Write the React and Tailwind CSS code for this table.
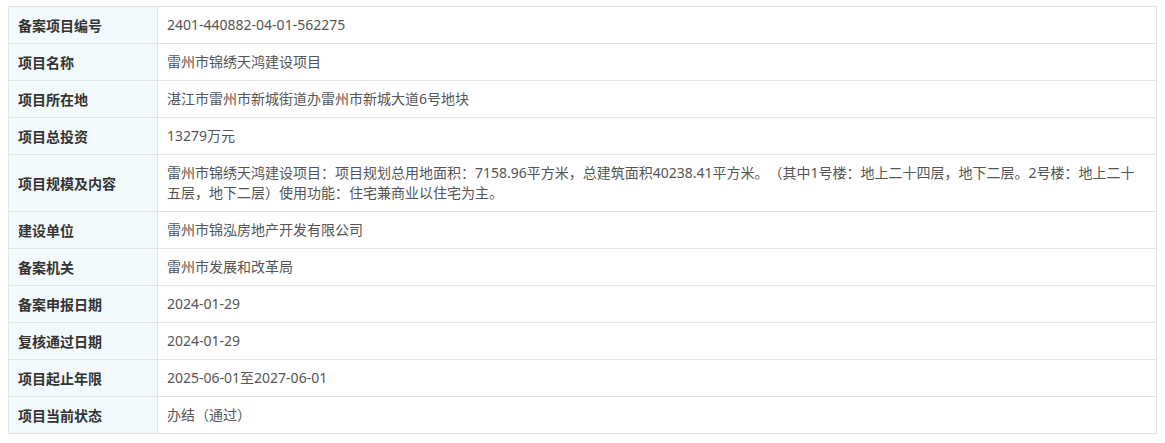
import React from 'react';

const rows = [
  ['备案项目编号', '2401-440882-04-01-562275'],
  ['项目名称', '雷州市锦绣天鸿建设项目'],
  ['项目所在地', '湛江市雷州市新城街道办雷州市新城大道6号地块'],
  ['项目总投资', '13279万元'],
  [
    '项目规模及内容',
    '雷州市锦绣天鸿建设项目：项目规划总用地面积：7158.96平方米，总建筑面积40238.41平方米。（其中1号楼：地上二十四层，地下二层。2号楼：地上二十五层，地下二层）使用功能：住宅兼商业以住宅为主。',
  ],
  ['建设单位', '雷州市锦泓房地产开发有限公司'],
  ['备案机关', '雷州市发展和改革局'],
  ['备案申报日期', '2024-01-29'],
  ['复核通过日期', '2024-01-29'],
  ['项目起止年限', '2025-06-01至2027-06-01'],
  ['项目当前状态', '办结（通过）'],
];

const App = () => {
  return (
    <div
      className="bg-white w-[1165px] h-[443px] pt-[6px] pl-[8px] [text-spacing-trim:space-all]"
      style={{ fontFamily: '"Noto Sans", "Noto Sans CJK SC", sans-serif' }}
    >
      <table className="w-[1149px] border-collapse border border-[#e3e3e3] text-[14px]">
        <tbody>
          {rows.map(([label, value]) => (
            <tr key={label}>
              <th className="w-[149px] h-[37px] border border-[#e3e3e3] bg-[#f2fafd] px-[9px] text-left font-bold text-[#333] align-middle">
                {label}
              </th>
              <td className="border border-[#e3e3e3] pl-[9px] pr-[14px] py-[8px] text-[#555] leading-[20px] align-middle">
                {value}
              </td>
            </tr>
          ))}
        </tbody>
      </table>
    </div>
  );
};

export default App;
